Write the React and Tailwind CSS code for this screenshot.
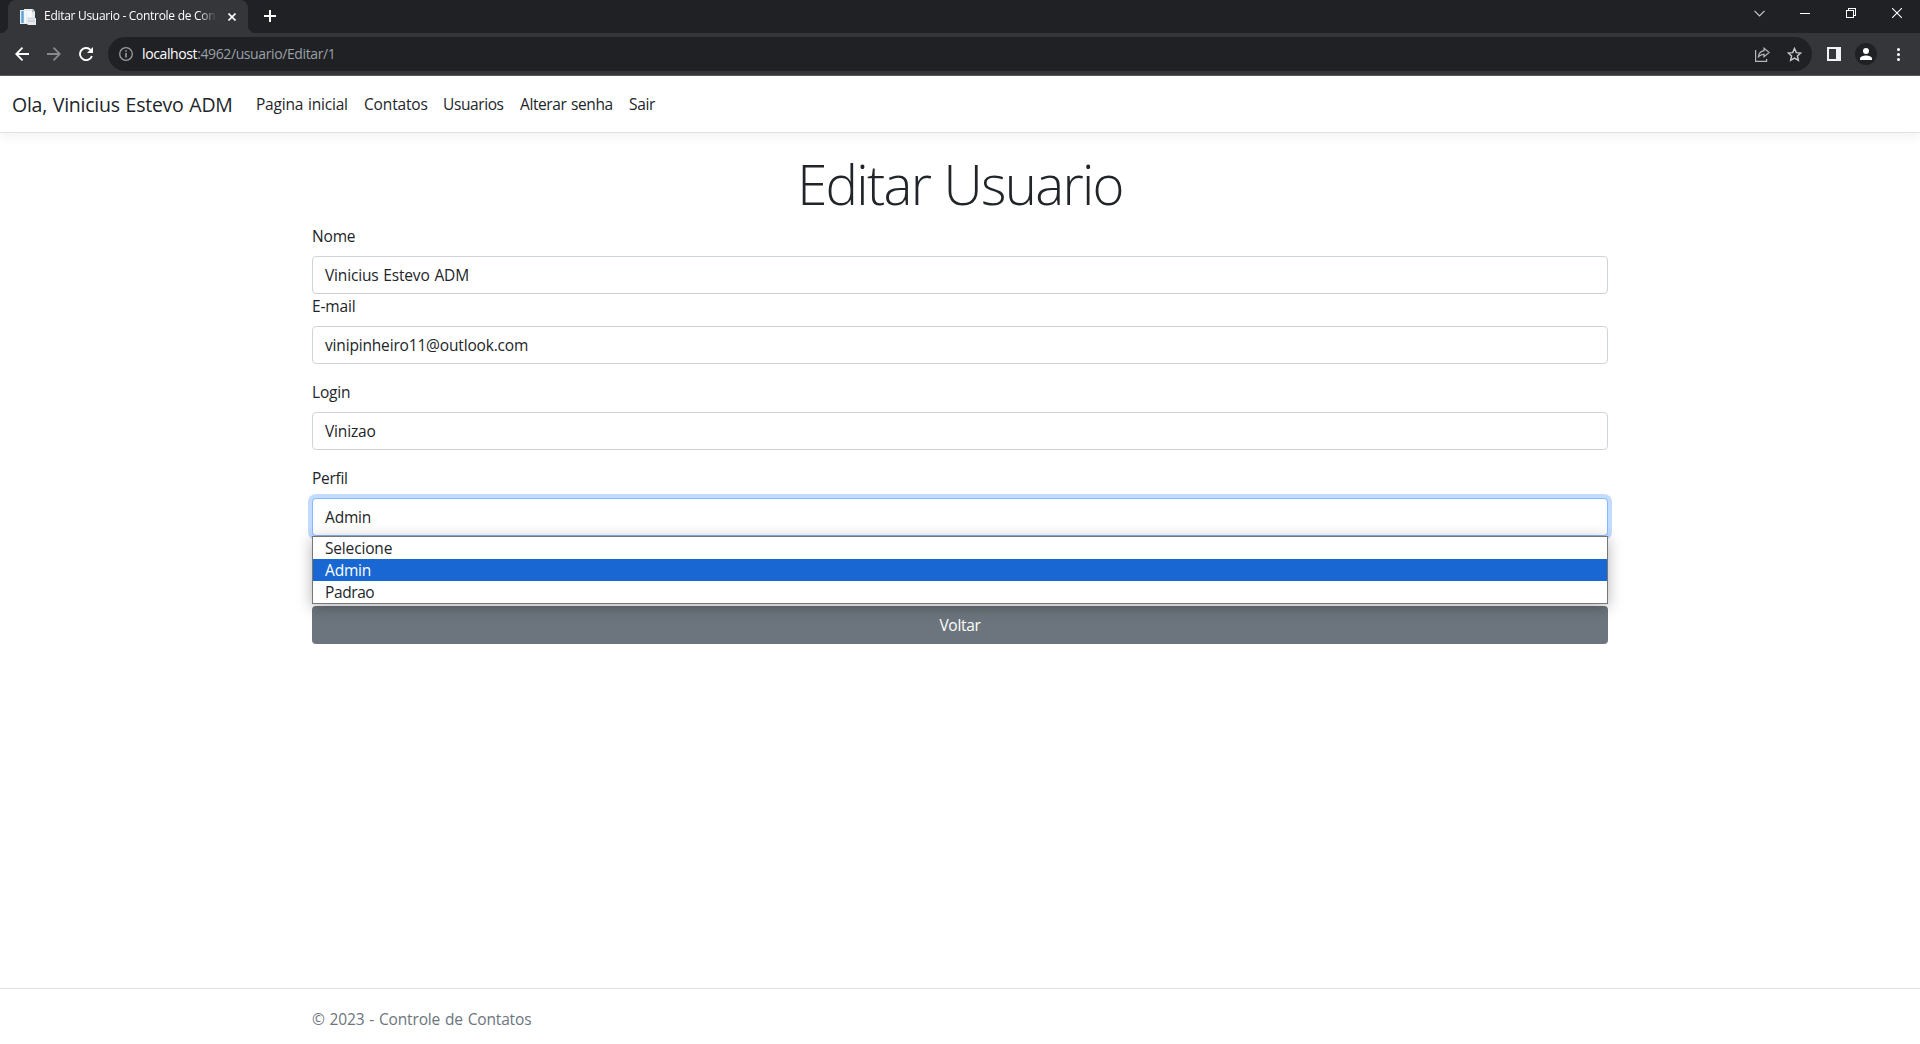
import React from "react";

function BrowserTabs() {
  return (
    <div className="flex h-[33px] bg-[#202124] pl-2 text-white">
      <div className="relative flex h-[33px] w-[240px] items-center rounded-t-lg bg-[#35363a] pl-3 pr-3">
        <span className="absolute -left-2 bottom-0 size-2 bg-[radial-gradient(circle_at_0_0,#202124_8px,#35363a_8.5px)]" />
        <span className="absolute -right-2 bottom-0 size-2 bg-[radial-gradient(circle_at_100%_0,#202124_8px,#35363a_8.5px)]" />
        <svg className="size-4 shrink-0" viewBox="0 0 16 16">
          <path d="M0 1h4V0h9l2 2.500V9h1v7H8l-1-1H0z" fill="#e6ebef" />
          <path d="M1.300 2h2.400v12H1.300z" fill="#5aa3d6" />
          <path d="M4.500 2h1.500v12H4.500z" fill="#fafbfc" />
          <path d="M7 2h5v6H7z" fill="#f6f8fa" />
          <path d="M12 0l3 3h-3z" fill="#aeb5bd" />
          <path d="M8 9h7v1H8zM8 11h7v2H8z" fill="#d0d5dc" />
        </svg>
        <div className="mb-[2px] ml-2 w-[174px] overflow-hidden whitespace-nowrap text-[12px] leading-4 tracking-[-0.29px] [mask-image:linear-gradient(to_right,#000_154px,transparent_173px)] [word-spacing:0px]">
          Editar Usuario - Controle de Contatos
        </div>
        <svg className="ml-auto size-2 shrink-0" viewBox="0 0 8 8" stroke="#fff" strokeWidth="1.6">
          <path d="M.5.5l7 7M7.5.5l-7 7" />
        </svg>
      </div>
      <svg className="ml-4 mt-[10px] size-3" viewBox="0 0 12 12" stroke="#fff" strokeWidth="2">
        <path d="M6 0v12M0 6h12" />
      </svg>
      <div className="ml-auto flex h-[26px] items-center pr-[18px]">
        <svg className="mr-[35px] h-[7px] w-[11px]" viewBox="0 0 11 7" fill="none" stroke="#c8c9ca" strokeWidth="1.2">
          <path d="M.5.8l5 5 5-5" />
        </svg>
        <svg className="mr-[36px] size-[10px]" viewBox="0 0 10 10" stroke="#fff" shapeRendering="crispEdges">
          <path d="M0 5.5h10" />
        </svg>
        <svg className="mr-[36px] size-[10px]" viewBox="0 0 10 10" fill="none" stroke="#fff" shapeRendering="crispEdges">
          <path d="M.5 2.500h7v7h-7zM2.500 2V.5h7v7H8" />
        </svg>
        <svg className="size-[10px]" viewBox="0 0 10 10" stroke="#fff" strokeWidth="1.1">
          <path d="M0 0l10 10M10 0L0 10" />
        </svg>
      </div>
    </div>
  );
}

function Toolbar() {
  return (
    <div className="flex h-[43px] items-center border-b border-[#5b595f] bg-[#35363a] pl-[15px] pr-5">
      <svg className="size-[14px]" viewBox="0 0 14 14" fill="none" stroke="#fff" strokeWidth="1.8">
        <path d="M14 7H1.300M7.500.7L1.200 7l6.300 6.300" />
      </svg>
      <svg className="ml-[18px] size-[14px]" viewBox="0 0 14 14" fill="none" stroke="#88898c" strokeWidth="1.8">
        <path d="M0 7h12.700M6.500.7L12.800 7l-6.300 6.300" />
      </svg>
      <svg className="ml-[18px] size-[14px]" viewBox="0 0 14 14" fill="none">
        <path d="M12.900 9A6.100 6.100 0 1 1 11.500 2.800" stroke="#fff" strokeWidth="1.9" />
        <path d="M14 0v6H8z" fill="#fff" />
      </svg>
      <div className="ml-[15px] flex h-[34px] w-[1704px] items-center rounded-full bg-[#202124] pl-[11px] pr-[10px]">
        <svg className="size-[14px]" viewBox="0 0 14 14" fill="none" stroke="#9a9da1" strokeWidth="1.3">
          <circle cx="7" cy="7" r="6.300" />
          <path d="M7 6v4.500M7 3.300v1.500" strokeWidth="1.6" />
        </svg>
        <div className="ml-[9px] whitespace-nowrap text-[14px] leading-5 tracking-[-0.39px] text-[#9aa0a6]">
          <span className="text-white">localhost</span>:4962/usuario/Editar/1
        </div>
        <svg className="ml-auto size-[15px]" viewBox="0 0 15 15" fill="none" stroke="#b4b6b8" strokeWidth="1.200">
          <path d="M.6 3v11.400h11V12" />
          <path d="M9 1.200L14.200 5.500 9 9.800V7.300C6 7.300 4.400 8.300 3.200 10.500 3.600 6.800 5.500 4.200 9 3.700z" />
        </svg>
        <svg className="ml-[17px] size-[15px]" viewBox="0 0 15 15" fill="none" stroke="#c9cacc" strokeWidth="1.400">
          <path d="M7.500 1.500l1.800 4.100 4.500.4-3.400 3 1 4.400-3.900-2.300-3.900 2.300 1-4.400-3.400-3 4.500-.4z" />
        </svg>
      </div>
      <svg className="ml-[15px] size-[14px]" viewBox="0 0 14 14" shapeRendering="crispEdges">
        <path d="M0 0h14v14H0zM2 2v10h7V2z" fill="#f1f3f4" fillRule="evenodd" />
      </svg>
      <div className="ml-[14px] flex size-[22px] items-center justify-center rounded-full bg-[#202124]">
        <svg className="size-3" viewBox="0 0 12 12" fill="#fff">
          <circle cx="6" cy="3" r="3" />
          <path d="M0 12v-1.500C0 8.500 3.500 7.500 6 7.500s6 1 6 3V12z" />
        </svg>
      </div>
      <svg className="ml-auto h-[13px] w-[3px]" viewBox="0 0 3 13" fill="#fff">
        <circle cx="1.500" cy="1.500" r="1.500" />
        <circle cx="1.500" cy="6.500" r="1.500" />
        <circle cx="1.500" cy="11.500" r="1.500" />
      </svg>
    </div>
  );
}

function SiteNav() {
  return (
    <header>
      <nav className="mb-4 flex h-[57px] items-center whitespace-nowrap border-b border-[#dee2e6] bg-white pl-3 leading-6 shadow-[0_4px_12px_rgba(0,0,0,0.05)]">
        <a className="w-[236px] pt-0.5 text-[19.5px] leading-[30px] tracking-[-0.25px]">Ola, Vinicius Estevo ADM</a>
        <a className="w-[108px] pl-2 tracking-[-0.2px]">Pagina inicial</a>
        <a className="w-[79px] pl-2 tracking-[-0.15px]">Contatos</a>
        <a className="w-[77px] pl-2 tracking-[-0.4px]">Usuarios</a>
        <a className="w-[109px] pl-2 tracking-[-0.4px]">Alterar senha</a>
        <a className="pl-2 tracking-[-0.3px]">Sair</a>
      </nav>
    </header>
  );
}

function Field({ label, value, className = "" }) {
  return (
    <div className={className}>
      <label className="mb-2 block leading-6">{label}</label>
      <div className="flex h-[38px] items-center rounded border border-[#ced4da] bg-white px-3 leading-6">{value}</div>
    </div>
  );
}

function ProfileSelect() {
  return (
    <div className="relative mb-[70px]">
      <label className="mb-2 block leading-6 tracking-[-0.3px]">Perfil</label>
      <div className="flex h-[38px] items-center rounded border border-[#86b7fe] bg-white px-3 leading-6 shadow-[0_0_0_4px_rgba(13,110,253,0.25)]">
        Admin
      </div>
      <div className="absolute inset-x-0 top-full z-10 border border-[#767676] bg-white leading-[22px] shadow-[0_3px_14px_rgba(0,0,0,0.3)]">
        <div className="h-[22px] px-3">Selecione</div>
        <div className="h-[22px] bg-[#1967d2] px-3 text-white">Admin</div>
        <div className="h-[22px] px-3 tracking-[-0.4px]">Padrao</div>
      </div>
    </div>
  );
}

export default function App() {
  return (
    <div className="flex h-screen flex-col overflow-hidden bg-white font-['Open_Sans','Noto_Sans',sans-serif] text-[15.5px] tracking-[-0.17px] text-[#212529] [word-spacing:1px]">
      <BrowserTabs />
      <Toolbar />
      <SiteNav />
      <main className="mx-auto w-[1296px]">
        <h1 className="mb-2 h-[67px] whitespace-nowrap text-center text-[54.5px] font-light leading-[71px] tracking-[-1.7px]">
          Editar Usuario
        </h1>
        <Field label="Nome" value="Vinicius Estevo ADM" />
        <Field label="E-mail" value="vinipinheiro11@outlook.com" className="mb-4" />
        <Field label="Login" value="Vinizao" className="mb-4" />
        <ProfileSelect />
        <button className="flex h-[38px] w-full items-center justify-center rounded bg-[#6c757d] leading-6 tracking-[-0.3px] text-white">Voltar</button>
      </main>
      <footer className="mt-auto h-[56px] shrink-0 border-t border-[#dee2e6] leading-[60px] text-[#6c757d]">
        <div className="mx-auto w-[1296px] tracking-[-0.16px]">© 2023 - Controle de Contatos</div>
      </footer>
    </div>
  );
}
